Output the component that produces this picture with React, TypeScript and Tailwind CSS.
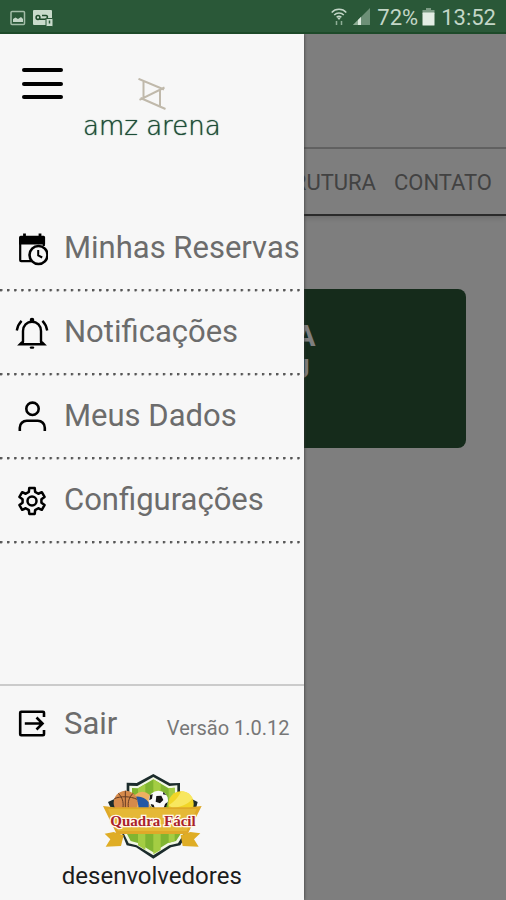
import React, { useState } from "react";

const NAV = ["QUADRAS", "ESTRUTURA", "CONTATO"];

// Outline of a six-tooth gear: [radius, degrees from the tooth centre]
const TOOTH = [[9.6, -19], [13.2, -12], [13.2, 12], [9.6, 19]];
const GEAR = [0, 1, 2, 3, 4, 5]
  .flatMap(i =>
    TOOTH.map(([r, deg]) => {
      const a = ((i * 60 - 90 + deg) * Math.PI) / 180;
      return `${(17 + r * Math.cos(a)).toFixed(2)},${(17 + r * Math.sin(a)).toFixed(2)}`;
    })
  )
  .join(" ");

function CalendarClockIcon() {
  return (
    <svg viewBox="0 0 32 34" className="w-8 h-[34px]" fill="none" stroke="currentColor">
      <path d="M15 29.200H5.200a1 1 0 0 1-1-1V6.500h23.600V14" strokeWidth="2.200" />
      <path d="M3.100 12.500V5.200a1.500 1.500 0 0 1 1.500-1.500h23a1.500 1.500 0 0 1 1.500 1.500v7.300z" fill="currentColor" stroke="none" />
      <path d="M8.500 5V1.500M24 5V1.500" strokeWidth="2.800" />
      <circle cx="22.500" cy="23" r="9" strokeWidth="2.600" fill="#f7f7f7" />
      <path d="M22.200 18v5.300l4 2.200" strokeWidth="2" />
    </svg>
  );
}

function BellIcon() {
  return (
    <svg viewBox="0 0 34 34" className="w-[34px] h-[34px]" fill="none" stroke="currentColor" strokeWidth="2.400" strokeLinecap="round">
      <path d="M8 26V15c0-5.300 3.800-9.200 9-9.200s9 3.900 9 9.200v11" />
      <path d="M6.700 26.500L5 28.200h24l-1.700-1.700" />
      <path d="M16 31.600h2" />
      <circle cx="17" cy="4.200" r="1.600" fill="currentColor" strokeWidth="1.500" />
      <path d="M6.600 4.800C4 7.300 2.500 10.400 1.800 14.500M27.400 4.800c2.600 2.500 4.100 5.600 4.800 9.700" strokeLinecap="butt" />
    </svg>
  );
}

function UserIcon() {
  return (
    <svg viewBox="0 0 32 34" className="w-8 h-[34px]" fill="none" stroke="currentColor" strokeWidth="2.600">
      <circle cx="16.500" cy="8.800" r="6.200" />
      <path d="M3.800 31v-3.300a7 7 0 0 1 7-7h11a7 7 0 0 1 7 7V31" />
    </svg>
  );
}

function GearIcon() {
  return (
    <svg viewBox="0 0 34 34" className="w-[34px] h-[34px]" fill="none" stroke="currentColor" strokeWidth="2.500" strokeLinejoin="round">
      <polygon points={GEAR} />
      <circle cx="17" cy="17" r="4.500" />
    </svg>
  );
}

function ExitIcon() {
  return (
    <svg viewBox="0 0 32 32" className="size-8" fill="none" stroke="currentColor" strokeWidth="2.600">
      <path d="M28 9V4.800a1 1 0 0 0-1-1H5.200a1 1 0 0 0-1 1v21.400a1 1 0 0 0 1 1H27a1 1 0 0 0 1-1V22" />
      <path d="M8.800 15.500h17.500M20.500 9.500l6 6-6 6" />
    </svg>
  );
}

const MENU = [
  { label: "Minhas Reservas", icon: <CalendarClockIcon /> },
  { label: "Notificações", icon: <BellIcon /> },
  { label: "Meus Dados", icon: <UserIcon /> },
  { label: "Configurações", icon: <GearIcon /> },
];

function StatusBar() {
  return (
    <header className="h-[34px] shrink-0 flex items-center justify-between px-2.5 pt-1 bg-[#2a5838] border-b-2 border-[#1d4a29] text-[#c3d6c7]">
      <div className="flex items-center gap-1.5">
        <svg viewBox="0 0 16 16" className="size-4">
          <rect x="1" y="1.500" width="13.500" height="13" rx="1" fill="none" stroke="#a3bda8" strokeWidth="1.500" />
          <path d="M3 12V9l2.500-1.500L8 9l3-2 2 2v3z" fill="#c3d6c7" />
        </svg>
        <svg viewBox="0 0 22 18" className="w-[22px] h-[18px]">
          <rect x="1" y="1" width="19" height="15" rx="1" fill="#c9dacb" />
          <g fill="none" stroke="#1f4a2b" strokeWidth="1.500">
            <circle cx="6" cy="8.500" r="1.900" />
            <path d="M7.500 10.200h6M10 6.500h4c2 0 2 3-.5 3.500" />
          </g>
          <rect x="14" y="9.500" width="7" height="8" rx="1" fill="#c9dacb" stroke="#2a5838" />
          <path d="M17.500 11.500v3" stroke="#2a5838" strokeWidth="1.500" />
        </svg>
      </div>
      <div className="flex items-center text-[22px] leading-7">
        <svg viewBox="0 0 16 18" className="w-4 h-[18px] mr-1.5 mb-0.5" fill="none" stroke="currentColor" strokeWidth="1.500">
          <path d="M.7 4.500C4.500.3 11.500.3 15.300 4.500M3.200 7c2.600-2.700 7-2.700 9.600 0M5.600 9.300c1.400-1.300 3.400-1.300 4.800 0" />
          <path d="M6 9.500h4L8 12z" fill="currentColor" stroke="none" />
          <path d="M5.500 13v4M10.500 13v4" stroke="#8fae96" />
        </svg>
        <svg viewBox="0 0 18 18" className="size-[18px] mr-1.5 mb-0.5">
          <path d="M0 17L17 0v17z" fill="#6d9077" />
          <path d="M0 17l8-8v8z" fill="#8fae96" />
          <path d="M5 12l3-3v8H5z" fill="#dbe8dd" />
        </svg>
        <span className="mr-1">72%</span>
        <svg viewBox="0 0 13 18" className="w-[13px] h-[18px] mr-1.5 mb-0.5">
          <path d="M4 0h5v2h3.500v4H.5V2H4z" fill="#7d9c85" />
          <rect x=".5" y="4.500" width="12" height="13" rx=".5" fill="#e3ede4" />
        </svg>
        <span>13:52</span>
      </div>
    </header>
  );
}

function ArenaLogo() {
  return (
    <div className="flex flex-col items-center">
      <svg viewBox="0 0 28 32" className="w-7 h-8" fill="none" stroke="#c0b9ab" strokeWidth="2">
        <path d="M.5.800L26 11.500M1.500 21.800L26.500 9.500M5.500 3v17M22 11.500V29M2.500 20L27.500 31" />
      </svg>
      <span className="font-['DejaVu_Sans',sans-serif] font-extralight text-[26px] leading-8 text-[#1d4d37] [text-shadow:0_0_1px_#1d4d37]">amz arena</span>
    </div>
  );
}

function QuadraFacilLogo() {
  return (
    <svg viewBox="0 0 336 276" className="w-28 h-[92px]">
      <path d="M172 18L222 46l30-1v30l53 27-18 70-34 60-28 6-53 34-52-34-28-6-24-60-32-70 56-26V44l30 1z" fill="#1c2c2c" />
      <path d="M172 27L220 54l24-2v48h44l-10 74-32 52-26 6-48 30-50-30-24-6-26-52-8-74h36V53l24 1z" fill="#f2f7e5" />
      <path d="M172 34L218 61l18-2v40h42l-8 74-30 46-24 6-44 28-46-28-22-6-24-46-8-74h36V60l18 1z" fill="#80b531" />
      <path d="M126 61l22-13v198l-22-14zM172 34l22 13v199l-22 13zM218 61l18-2v160l-18 6z" fill="#a4cd43" />
      <circle cx="139" cy="100" r="29" fill="#eeb061" />
      <path d="M113 88c16-6 34 0 45 15v19h-30c0-14-5-25-15-34z" fill="#2458a5" />
      <circle cx="89" cy="104" r="36" fill="#d68a4b" />
      <path d="M88 68v50M55 92c18-8 48-8 68 2M67 76c12 12 16 26 14 42M111 76c-12 12-16 26-14 42" fill="none" stroke="#633b24" strokeWidth="3" />
      <circle cx="187" cy="97" r="29" fill="#f9f9f9" />
      <path d="M181 84l15-1 6 13-10 10-13-5zM162 82l8-4-2 14-8 5zM202 72l9 9-10-2zM164 108l9 2 4 12-10-6zM207 108l8-6-4 14-8 4z" fill="#151515" />
      <circle cx="255" cy="108" r="38" fill="#f1d628" />
      <path d="M218 112c15-10 27-20 38-42 16 1 26 7 34 20-9 15-27 26-60 30z" fill="#f8e75f" />
      <path d="M53 192L26 197l17 17-14 22 46-2 8-32zM283 192l30 4-19 18 14 22-48-2-6-32z" fill="#dfad25" />
      <path d="M21 114l34 4h226l36-4-42 84H62z" fill="#dfa928" />
      <path d="M36 123h266l-30 66H66z" fill="#e5b836" />
      <text x="171" y="173" textAnchor="middle" fontFamily="Liberation Serif, serif" fontSize="45" fontWeight="700" fill="#a9222b" stroke="#fff8ea" strokeWidth="8" paintOrder="stroke">
        Quadra Fácil
      </text>
    </svg>
  );
}

function Page() {
  return (
    <main className="flex-1 bg-[#fdfdfd]">
      <div className="h-[115px] border-b-2 border-[#c2c2c2]" />
      <nav className="h-[67px] flex items-center justify-end gap-[18px] pr-3.5 pt-0.5 overflow-hidden border-b-2 border-[#555] shadow-md">
        {NAV.map(item => (
          <a key={item} href="#" className="text-[22px] leading-8 text-[#858585]">{item}</a>
        ))}
      </nav>
      <section className="mx-10 mt-[73px] h-[159px] rounded-lg bg-[#2a5636] text-center text-white font-bold pt-[29px]">
        <h2 className="text-[29px] leading-9">RESERVA</h2>
        <p className="text-[25px] leading-8">ARACAJU</p>
      </section>
    </main>
  );
}

export default function App() {
  const [open, setOpen] = useState(true);

  return (
    <div className="min-h-screen flex flex-col font-[Roboto,sans-serif]">
      <StatusBar />
      <div className="relative flex-1 flex flex-col overflow-hidden">
        <Page />
        {open && (
          <>
            <div className="absolute inset-0 bg-black/50" onClick={() => setOpen(false)} />

            {/* Drawer */}
            <aside className="absolute inset-y-0 left-0 w-3/5 flex flex-col bg-[#f7f7f7] shadow-[0_0_3px_#333]">
              <div className="flex items-start pl-[22px] pt-[34px]">
                <button aria-label="Fechar menu" onClick={() => setOpen(false)} className="w-[41px] h-[31px] flex flex-col justify-between">
                  <span className="w-full h-1 rounded-full bg-black" />
                  <span className="w-full h-1 rounded-full bg-black" />
                  <span className="w-full h-1 rounded-full bg-black" />
                </button>
                <div className="pl-5 pt-2.5">
                  <ArenaLogo />
                </div>
              </div>

              <ul className="mt-[66px]">
                {MENU.map(item => (
                  <li key={item.label}>
                    <a href="#" className="h-[81px] flex items-center text-[31px] text-[#6c6c6c] whitespace-nowrap">
                      <span className="w-16 flex justify-center text-black">{item.icon}</span>
                      {item.label}
                    </a>
                    <div className="h-[3px] mr-1 bg-[radial-gradient(circle_at_1px_1px,#555_1px,transparent_2px)] bg-[length:2.36%_3px]" />
                  </li>
                ))}
              </ul>

              {/* Footer */}
              <footer className="mt-auto border-t-2 border-[#cbcbcb] pt-4 pb-2">
                <div className="flex items-center pr-3.5">
                  <a href="#" className="flex items-center text-[31px] leading-[44px] text-[#6c6c6c]">
                    <span className="w-16 flex justify-center text-black"><ExitIcon /></span>
                    Sair
                  </a>
                  <span className="ml-auto pt-2 text-xl text-[#777]">Versão 1.0.12</span>
                </div>
                <div className="mt-[22px] flex flex-col items-center">
                  <QuadraFacilLogo />
                  <span className="text-2xl leading-8 text-[#1c1c1c]">desenvolvedores</span>
                </div>
              </footer>
            </aside>
          </>
        )}
      </div>
    </div>
  );
}
